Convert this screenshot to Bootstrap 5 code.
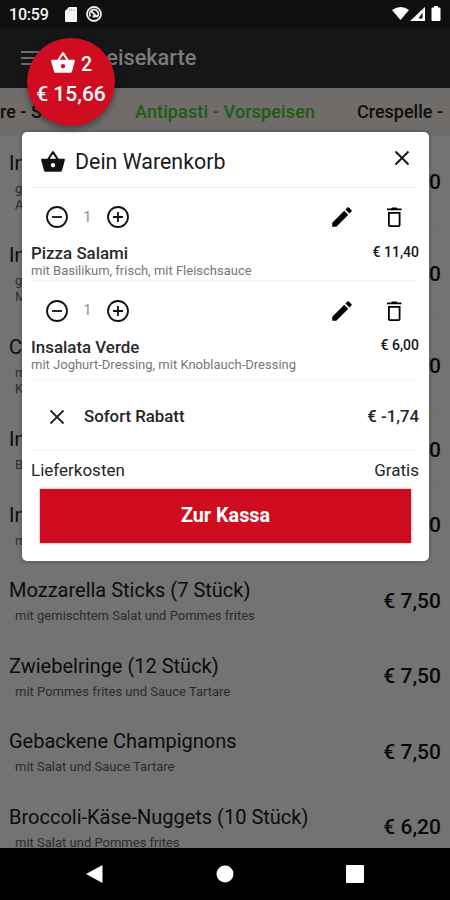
<!DOCTYPE html>
<html lang="de">
<head>
<meta charset="utf-8">
<meta name="viewport" content="width=device-width, initial-scale=1">
<title>Speisekarte</title>
<link href="https://cdn.jsdelivr.net/npm/bootstrap@5.3.0/dist/css/bootstrap.min.css" rel="stylesheet">
<style>
body{font-family:Roboto,"Liberation Sans",sans-serif;background:#000;color:#111;line-height:1.2}
svg{display:block;flex:none}
.screen{width:450px;height:900px}
.statusbar{height:28px;background:#0d0f10;color:#f4f4f4;font-size:16px;font-weight:500}
.st-time{letter-spacing:-.2px;margin-left:1px;padding-top:1px}
.appbar{height:60px;background:#141617;color:#7b7b7b;font-size:21.7px;font-weight:500}
.menu-ico{margin-left:21px}
.bar-title{margin-left:36px;padding-top:1px}
.tabs{height:48px;background:#6f6c69;font-size:18px;font-weight:500;color:#0e0d0d}
.tabs .now{color:#1e5c14;letter-spacing:.12px}
.tab-a{width:135px;flex:none}
.tab-b{width:222px;flex:none}
.dishes{height:712px;background:#737373}
.dish{height:75.5px;border-bottom:1px solid #6e6e6e;padding:0 9px 0 9px;flex:none}
.dish.tall{height:92px}
.dish-name{font-size:20px;line-height:24px;color:#0c0c0c;margin-top:15px}
.dish-note{font-size:13px;line-height:16px;color:#2c2c2c;padding-left:6px;margin-top:6px}
.dish-price{font-size:21px;font-weight:500;color:#080808;padding-top:2px}
.navkeys{height:52px;background:#000;padding:0 86px 0 85px}
.bubble{left:27px;top:38px;width:88px;height:88px;background:#cf0c20;color:#fff;font-weight:500;font-size:21px;box-shadow:0 3px 7px rgba(0,0,0,.4)}
.bub-top{margin-top:12px;gap:5px;height:26px}
.bub-n{font-size:19.5px;padding-top:4px}
.bub-sum{margin-top:6px}
.cartbox{left:22px;top:132px;width:407px;height:429px;background:#fff;border-radius:5px;padding:0 10px 0 9px;box-shadow:0 0 4px rgba(0,0,0,.3)}
.cart-head{height:56px;border-bottom:1px solid #f1f1f1}
.head-ico{margin:5px 0 0 9px}
.cart-title{font-size:21.400px;color:#1b1b1b;margin:5px 0 0 9px}
.head-x{margin:-4px 9px 0 0}
.entry{height:93px;border-bottom:1px solid #f5f5f5}
.entry.second{height:100px}
.tools{height:56px;padding:2px 13px 0 14px}
.second .tools{padding-top:3px}
.qty{width:37px;text-align:center;font-size:14px;color:#8a8a8a}
.edit{margin-right:27px}
.item-name{font-size:16.900px;line-height:20px;font-weight:500;color:#2a2a2a}
.entry .item-name{margin-top:-1px}
.item-price{font-size:14px;font-weight:500;color:#161616;line-height:17px}
.entry .item-note{font-size:13px;line-height:16px;color:#777}
.discount{height:70px;border-bottom:1px solid #f1f1f1;font-size:16.800px;font-weight:500;padding:2px 0 0 14px;color:#252525}
.disc-label{margin-left:19px}
.delivery{height:38px;font-size:17px;color:#252525}
.pay{height:54px;margin:0 8px 0 9px;background:#cf0c20;color:#fff;font-weight:700;font-size:19.800px;box-shadow:0 0 2px rgba(120,0,0,.5)}
</style>
<script src="https://cdn.jsdelivr.net/npm/bootstrap@5.3.0/dist/js/bootstrap.bundle.min.js"></script>
</head>
<body>
<svg width="0" height="0" class="position-absolute">
<defs>
<symbol id="basket" viewBox="0 0 24 24"><path fill-rule="evenodd" d="M17.200 9l-4.400-6.600a1 1 0 0 0-1.600 0L6.800 9H2c-.6 0-1 .5-1 1l.1.300 2.500 9.200C3.800 20.400 4.600 21 5.500 21h13c.9 0 1.700-.6 1.900-1.500L23 10c0-.6-.4-1-1-1zM9 9l3-4.400L15 9zm3 8a2 2 0 1 1 0-4 2 2 0 0 1 0 4z"/></symbol>
<symbol id="minus" viewBox="0 0 24 24"><g fill="none" stroke="currentColor" stroke-width="1.800"><circle cx="12" cy="12" r="10"/><path d="M7 12h10"/></g></symbol>
<symbol id="plus" viewBox="0 0 24 24"><g fill="none" stroke="currentColor" stroke-width="1.800"><circle cx="12" cy="12" r="10"/><path d="M7 12h10M12 7v10"/></g></symbol>
<symbol id="pencil" viewBox="0 0 24 24"><path d="M3 17.250V21h3.750L17.800 9.900l-3.700-3.700zM20.700 7a1 1 0 0 0 0-1.400l-2.300-2.300a1 1 0 0 0-1.400 0l-1.800 1.800 3.700 3.700z"/></symbol>
<symbol id="trash" viewBox="0 0 24 24"><path fill-rule="evenodd" d="M6 20c0 1.100.9 2 2 2h8.500c1.100 0 2-.9 2-2V7H6zM7.800 8.800h8.900v11.400H7.800zM15.500 3.500l-1-1H10l-1 1H5v1.800h14.500V3.500z"/></symbol>
<symbol id="cross" viewBox="0 0 16 16"><path d="M1.500 1.500l13 13M14.500 1.500l-13 13" fill="none" stroke="currentColor" stroke-width="1.800"/></symbol>
</defs>
</svg>
<main class="screen position-relative overflow-hidden d-flex flex-column">
<header class="statusbar d-flex align-items-center px-2 flex-shrink-0">
<span class="st-time">10:59</span>
<svg class="ms-3" width="12" height="15" viewBox="0 0 12 15" fill="#f4f4f4"><path d="M4 0h7a1 1 0 0 1 1 1v13a1 1 0 0 1-1 1H1a1 1 0 0 1-1-1V4z"/><path d="M4.300 2v2M6.500 2v2M8.700 2v2" stroke="#bbb"/></svg>
<svg class="ms-2" width="18" height="18" viewBox="0 0 18 18" fill="none" stroke="#eee"><circle cx="9" cy="9" r="7" stroke-width="1.800"/><path d="M5.500 11.500A4.300 4.300 0 1 1 12 12M6 6l6 6M7.500 11.500h3" stroke-width="1.800"/></svg>
<svg class="ms-auto" width="50" height="18" viewBox="0 0 50 18" fill="#fff"><path d="M0 5Q9-1 17 5L8.500 15zM33 2v14H18z"/><path d="M30.500 7.500v6h-4z" fill="#111"/><path d="M42 1h4v1.500h1.500q1 0 1 1V15q0 1-1 1h-7q-1 0-1-1V3.500q0-1 1-1H42z"/></svg>
</header>
<nav class="appbar d-flex align-items-center flex-shrink-0">
<svg width="24" height="18" viewBox="0 0 24 18" class="menu-ico" stroke="#6d6d6d" stroke-width="2"><path d="M0 3h24M0 9h24M0 15h24"/></svg>
<span class="bar-title">Speisekarte</span>
</nav>
<div class="tabs d-flex align-items-center text-nowrap flex-shrink-0 overflow-hidden">
<span class="tab-a">re - S</span><span class="now tab-b">Antipasti - Vorspeisen</span><span>Crespelle -</span>
</div>
<section class="dishes d-flex flex-column overflow-hidden">
<div class="dish tall d-flex justify-content-between align-items-center"><div class="align-self-start"><div class="dish-name">In</div><div class="dish-note">g<br>A</div></div><span class="dish-price">0</span></div>
<div class="dish tall d-flex justify-content-between align-items-center"><div class="align-self-start"><div class="dish-name">In</div><div class="dish-note">g<br>M</div></div><span class="dish-price">0</span></div>
<div class="dish tall d-flex justify-content-between align-items-center"><div class="align-self-start"><div class="dish-name">C</div><div class="dish-note">m<br>K</div></div><span class="dish-price">0</span></div>
<div class="dish d-flex justify-content-between align-items-center"><div class="align-self-start"><div class="dish-name">In</div><div class="dish-note">B</div></div><span class="dish-price">0</span></div>
<div class="dish d-flex justify-content-between align-items-center"><div class="align-self-start"><div class="dish-name">In</div><div class="dish-note">m</div></div><span class="dish-price">0</span></div>
<div class="dish d-flex justify-content-between align-items-center"><div class="align-self-start"><div class="dish-name">Mozzarella Sticks (7 Stück)</div><div class="dish-note">mit gemischtem Salat und Pommes frites</div></div><span class="dish-price">€ 7,50</span></div>
<div class="dish d-flex justify-content-between align-items-center"><div class="align-self-start"><div class="dish-name">Zwiebelringe (12 Stück)</div><div class="dish-note">mit Pommes frites und Sauce Tartare</div></div><span class="dish-price">€ 7,50</span></div>
<div class="dish d-flex justify-content-between align-items-center"><div class="align-self-start"><div class="dish-name">Gebackene Champignons</div><div class="dish-note">mit Salat und Sauce Tartare</div></div><span class="dish-price">€ 7,50</span></div>
<div class="dish d-flex justify-content-between align-items-center"><div class="align-self-start"><div class="dish-name">Broccoli-Käse-Nuggets (10 Stück)</div><div class="dish-note">mit Salat und Pommes frites</div></div><span class="dish-price">€ 6,20</span></div>
</section>
<footer class="navkeys d-flex align-items-center justify-content-between flex-shrink-0">
<svg width="18" height="20" viewBox="0 0 18 20" fill="#fff"><path d="M17.500 1v18L1 10z"/></svg>
<svg width="18" height="18" viewBox="0 0 18 18" fill="#fff"><circle cx="9" cy="9" r="8.500"/></svg>
<svg width="18" height="18" viewBox="0 0 18 18" fill="#fff"><rect width="18" height="18" rx="1"/></svg>
</footer>

<section class="cartbox position-absolute">
<div class="cart-head d-flex align-items-center">
<svg width="26" height="26" class="head-ico" fill="#111"><use href="#basket"/></svg>
<span class="cart-title">Dein Warenkorb</span>
<svg width="16" height="16" class="head-x ms-auto"><use href="#cross"/></svg>
</div>
<div class="entry">
<div class="tools d-flex align-items-center"><svg width="24" height="24"><use href="#minus"/></svg><span class="qty">1</span><svg width="24" height="24"><use href="#plus"/></svg><svg class="edit ms-auto" width="26" height="26"><use href="#pencil"/></svg><svg width="24" height="24"><use href="#trash"/></svg></div>
<div class="d-flex justify-content-between"><span class="item-name">Pizza Salami</span><span class="item-price">€ 11,40</span></div>
<div class="item-note">mit Basilikum, frisch, mit Fleischsauce</div>
</div>
<div class="entry second">
<div class="tools d-flex align-items-center"><svg width="24" height="24"><use href="#minus"/></svg><span class="qty">1</span><svg width="24" height="24"><use href="#plus"/></svg><svg class="edit ms-auto" width="26" height="26"><use href="#pencil"/></svg><svg width="24" height="24"><use href="#trash"/></svg></div>
<div class="d-flex justify-content-between"><span class="item-name mt-0">Insalata Verde</span><span class="item-price">€ 6,00</span></div>
<div class="item-note">mit Joghurt-Dressing, mit Knoblauch-Dressing</div>
</div>
<div class="discount d-flex align-items-center"><svg width="16" height="16" class="ms-1"><use href="#cross"/></svg><span class="disc-label">Sofort Rabatt</span><span class="ms-auto">€ -1,74</span></div>
<div class="delivery d-flex align-items-center justify-content-between"><span>Lieferkosten</span><span>Gratis</span></div>
<div class="pay d-flex align-items-center justify-content-center">Zur Kassa</div>
</section>

<div class="bubble position-absolute rounded-circle d-flex flex-column align-items-center">
<div class="bub-top d-flex align-items-center"><svg width="26" height="26" fill="#fff"><use href="#basket"/></svg><span class="bub-n">2</span></div>
<div class="bub-sum">€ 15,66</div>
</div>
</main>
</body>
</html>
